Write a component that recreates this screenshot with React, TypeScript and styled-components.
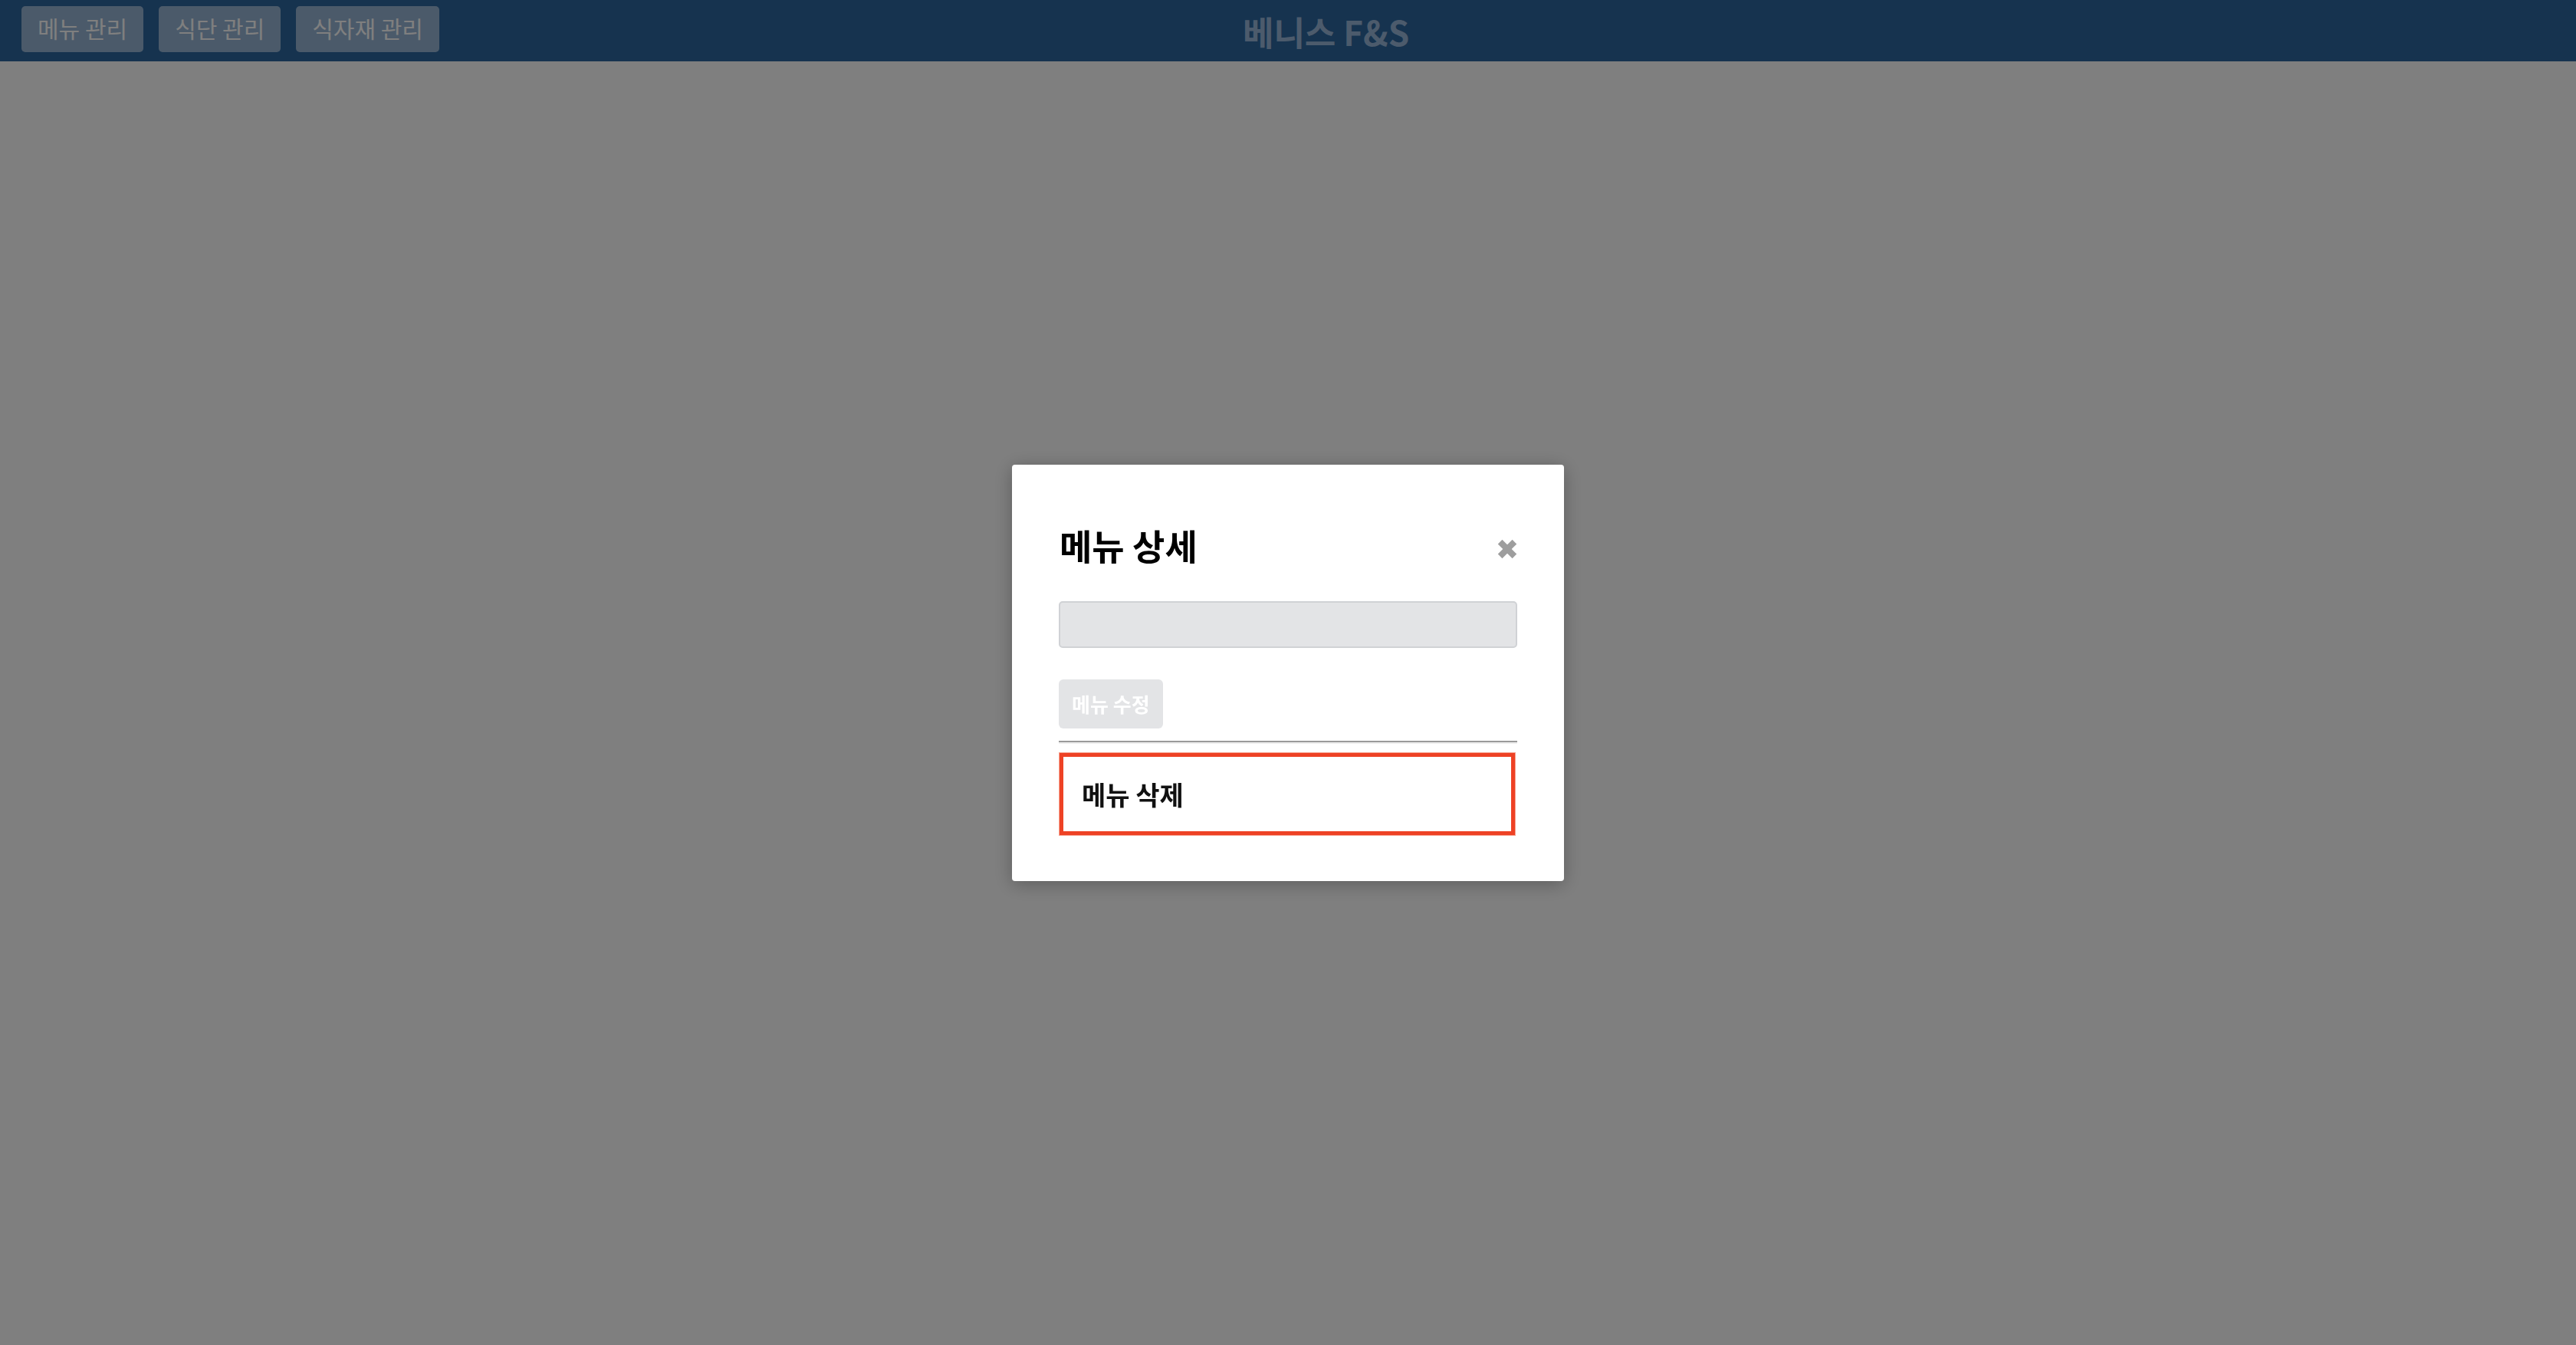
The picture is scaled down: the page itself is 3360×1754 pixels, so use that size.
import React from "react";
import styled, { createGlobalStyle } from "styled-components";

const GlobalStyle = createGlobalStyle`
  html, body {
    margin: 0;
    padding: 0;
    background: #ffffff;
    font-family: "Noto Sans CJK KR", "Noto Sans", sans-serif;
  }
  #root {
    min-height: 100vh;
  }
`;

const Page = styled.div`
  min-height: 100vh;
  background: #ffffff;
`;

const Header = styled.header`
  display: grid;
  grid-template-columns: 1fr;
  align-items: center;
  height: 80px;
  padding: 0 28px;
  background: #2c669e;
  box-sizing: border-box;
`;

const Nav = styled.nav`
  grid-area: 1 / 1;
  display: flex;
  gap: 20px;
  align-items: center;
  align-self: start;
  justify-self: start;
  margin-top: 8px;
`;

const NavButton = styled.button`
  height: 60px;
  padding: 0 21px 5px 21px;
  border: none;
  border-radius: 5px;
  background: #97b5d4;
  color: #ffffff;
  font-family: "Noto Sans CJK KR", "Noto Sans", sans-serif;
  font-size: 30px;
  font-weight: 400;
  line-height: 1;
  cursor: pointer;
`;

const Brand = styled.h1`
  grid-area: 1 / 1;
  justify-self: center;
  margin: 2px 0 0 99px;
  font-size: 44px;
  font-weight: 700;
  line-height: 1;
  color: #98b6d8;
`;

const Overlay = styled.div`
  position: fixed;
  inset: 0;
  background: rgba(0, 0, 0, 0.5);
  display: flex;
  align-items: center;
  justify-content: center;
`;

const Modal = styled.div`
  width: 720px;
  box-sizing: border-box;
  padding: 60px 61px 60px 61px;
  background: #ffffff;
  border-radius: 4px;
  box-shadow: 0 4px 24px rgba(0, 0, 0, 0.28);
  display: flex;
  flex-direction: column;
`;

const ModalHeader = styled.div`
  display: flex;
  justify-content: space-between;
  align-items: center;
  height: 100px;
  margin-bottom: 18px;
`;

const ModalTitle = styled.h2`
  margin: 0 0 12px 1px;
  font-size: 46px;
  font-weight: 700;
  line-height: 1;
  color: #000000;
`;

const CloseButton = styled.button`
  width: 26px;
  height: 26px;
  padding: 0;
  border: none;
  background: transparent;
  display: flex;
  cursor: pointer;
`;

const NameInput = styled.input`
  width: 100%;
  height: 61px;
  box-sizing: border-box;
  border: 2px solid #d0d2d5;
  border-radius: 5px;
  background: #e3e4e6;
  margin: 0;
`;

const EditButton = styled.button`
  align-self: flex-start;
  height: 64px;
  margin-top: 41px;
  padding: 0 17px;
  border: none;
  border-radius: 6px;
  background: #e3e4e6;
  color: #ffffff;
  font-family: "Noto Sans CJK KR", "Noto Sans", sans-serif;
  font-size: 26px;
  font-weight: 700;
  line-height: 1;
`;

const Divider = styled.hr`
  width: 100%;
  height: 0;
  margin: 16px 0 12px 0;
  border: none;
  border-top: 2px solid #9a9a9a;
  border-bottom: 2px solid #eeeeee;
`;

const DeleteBox = styled.div`
  height: 107px;
  margin: 0 3px 0 1px;
  box-sizing: border-box;
  border: 5px solid #ee4225;
  box-shadow: 0 0 0 1px #f6a594;
  padding: 2px 0 0 24px;
  display: flex;
  align-items: center;
  font-size: 34px;
  font-weight: 700;
  line-height: 1;
  color: #111111;
`;

const CloseIcon = () => (
  <svg width="26" height="26" viewBox="0 0 26 26">
    <line x1="3.6" y1="3.6" x2="22.4" y2="22.4" stroke="#9e9e9e" strokeWidth="8" strokeLinecap="butt" />
    <line x1="22.4" y1="3.6" x2="3.6" y2="22.4" stroke="#9e9e9e" strokeWidth="8" strokeLinecap="butt" />
  </svg>
);

export default function App() {
  return (
    <>
      <GlobalStyle />
      <Page>
        <Header>
          <Nav>
            <NavButton>메뉴 관리</NavButton>
            <NavButton>식단 관리</NavButton>
            <NavButton>식자재 관리</NavButton>
          </Nav>
          <Brand>베니스 F&amp;S</Brand>
        </Header>
      </Page>
      <Overlay>
        <Modal>
          <ModalHeader>
            <ModalTitle>메뉴 상세</ModalTitle>
            <CloseButton aria-label="닫기">
              <CloseIcon />
            </CloseButton>
          </ModalHeader>
          <NameInput disabled />
          <EditButton disabled>메뉴 수정</EditButton>
          <Divider />
          <DeleteBox>메뉴 삭제</DeleteBox>
        </Modal>
      </Overlay>
    </>
  );
}
